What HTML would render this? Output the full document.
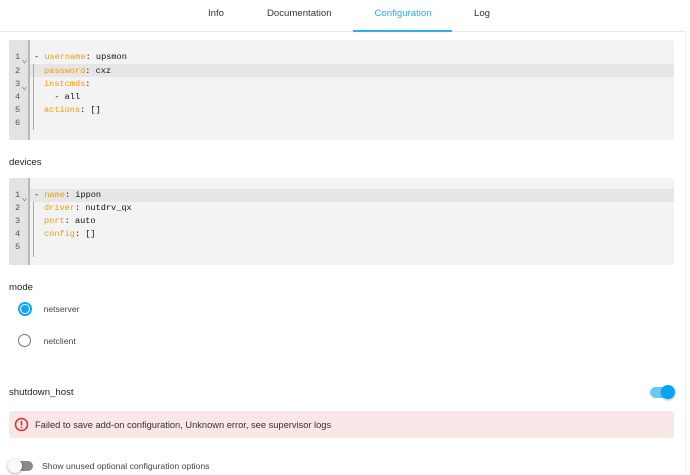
<!DOCTYPE html>
<html>
<head>
<meta charset="utf-8">
<style>
html,body{margin:0;padding:0;width:690px;height:475px;overflow:hidden;background:#fff;font-family:"Liberation Sans",sans-serif;color:#212121}
.a{position:absolute;white-space:nowrap}
.tab{top:8px;font-size:9.6px;line-height:12px;color:#333}
.ed{position:absolute;left:9px;width:665px;background:#f3f3f3;border-radius:2px;overflow:hidden}
.gut{position:absolute;left:0;top:0;bottom:0;width:19px;background:#e3e3e3;border-right:2px solid #b8b8b8}
.ln{position:absolute;left:0;right:0;height:13px;background:#e6e6e6}
.c{position:absolute;left:35px;font:8.6px/13px "Liberation Mono",monospace;color:#111;white-space:pre}
.n{position:absolute;left:6px;font:8.67px/13px "Liberation Mono",monospace;color:#555}
.c b{font-weight:normal;color:#f39c07}
.guide{position:absolute;left:24px;width:1px;background:#aaa}
.chev{position:absolute;left:13px;width:5px;height:5px}
.lbl{font-size:9.6px;line-height:12px;left:9px;color:#222}
.sm{font-size:8.67px;line-height:10px;color:#444}
</style>
</head>
<body>
<div class="a tab" style="left:208px">Info</div>
<div class="a tab" style="left:267px">Documentation</div>
<div class="a tab" style="left:374.5px;color:#2aa9ee">Configuration</div>
<div class="a tab" style="left:474px">Log</div>
<div class="a" style="left:0;top:31px;width:685px;height:1px;background:#e9e9e9"></div>
<div class="a" style="left:353px;top:30px;width:99px;height:2px;background:#29b0f0"></div>
<div class="a" style="left:685px;top:31px;width:1px;height:444px;background:#eee"></div>

<div class="ed" style="top:40px;height:100px">
  <div class="ln" style="top:24px;left:20px"></div>
  <div class="gut"></div>
  <div class="guide" style="top:24px;bottom:10px"></div>
  <div class="n" style="top:11px">1</div><svg class="chev" style="top:19px" viewBox="0 0 5 5"><path d="M.5 1L2.5 4L4.5 1" fill="none" stroke="#888" stroke-width=".7"/></svg>
  <div class="n" style="top:25px">2</div>
  <div class="n" style="top:38px">3</div><svg class="chev" style="top:46px" viewBox="0 0 5 5"><path d="M.5 1L2.5 4L4.5 1" fill="none" stroke="#888" stroke-width=".7"/></svg>
  <div class="n" style="top:51px">4</div>
  <div class="n" style="top:64px">5</div>
  <div class="n" style="top:77px">6</div>
  <div class="c" style="left:25px;top:11px">- <b>username</b>: upsmon</div>
  <div class="c" style="top:25px"><b>password</b>: cxz</div>
  <div class="c" style="top:38px"><b>instcmds</b>:</div>
  <div class="c" style="top:51px">  - all</div>
  <div class="c" style="top:64px"><b>actions</b>: []</div>
</div>

<div class="a lbl" style="top:157px">devices</div>

<div class="ed" style="top:178px;height:87px">
  <div class="ln" style="top:11px;left:20px"></div>
  <div class="gut"></div>
  <div class="guide" style="top:24px;bottom:8px"></div>
  <div class="n" style="top:11px">1</div><svg class="chev" style="top:19px" viewBox="0 0 5 5"><path d="M.5 1L2.5 4L4.5 1" fill="none" stroke="#888" stroke-width=".7"/></svg>
  <div class="n" style="top:24px">2</div>
  <div class="n" style="top:37px">3</div>
  <div class="n" style="top:50px">4</div>
  <div class="n" style="top:63px">5</div>
  <div class="c" style="left:25px;top:11px">- <b>name</b>: ippon</div>
  <div class="c" style="top:24px"><b>driver</b>: nutdrv_qx</div>
  <div class="c" style="top:37px"><b>port</b>: auto</div>
  <div class="c" style="top:50px"><b>config</b>: []</div>
</div>

<div class="a lbl" style="top:282px">mode</div>

<div class="a" style="left:18px;top:302px;width:10px;height:10px;border:2px solid #12a5f5;border-radius:50%"></div>
<div class="a" style="left:21.25px;top:305.25px;width:7.5px;height:7.5px;background:#12a5f5;border-radius:50%"></div>
<div class="a sm" style="left:43.5px;top:304px">netserver</div>
<div class="a" style="left:18px;top:334px;width:11px;height:11px;border:1.5px solid #757575;border-radius:50%"></div>
<div class="a sm" style="left:43.5px;top:336px">netclient</div>

<div class="a lbl" style="top:387px">shutdown_host</div>

<div class="a" style="left:650px;top:387px;width:20px;height:11px;background:#6cc8fa;border-radius:6px"></div>
<div class="a" style="left:661px;top:385px;width:14px;height:14px;background:#06a4f5;border-radius:50%;box-shadow:0 1px 2px rgba(0,0,0,.3)"></div>

<div class="a" style="left:9px;top:411px;width:665px;height:27px;background:#f9e6e6;border-radius:3px"></div>
<svg class="a" style="left:14px;top:417px" width="15" height="15" viewBox="0 0 15 15"><circle cx="7.5" cy="7.5" r="6" fill="none" stroke="#db2b2b" stroke-width="1.5"/><path d="M7.5 3.8v4.7M7.5 9.8v1.5" stroke="#db2b2b" stroke-width="1.6" fill="none"/></svg>
<div class="a" style="left:35px;top:419px;font-size:9.31px;line-height:12px;color:#333">Failed to save add-on configuration, Unknown error, see supervisor logs</div>

<div class="a" style="left:14px;top:461px;width:19px;height:10px;background:#8a8a8a;border-radius:5px"></div>
<div class="a" style="left:8px;top:459px;width:14px;height:14px;background:#fafafa;border-radius:50%;box-shadow:0 1px 3px rgba(0,0,0,.35)"></div>
<div class="a sm" style="left:42px;top:461px">Show unused optional configuration options</div>
</body>
</html>
